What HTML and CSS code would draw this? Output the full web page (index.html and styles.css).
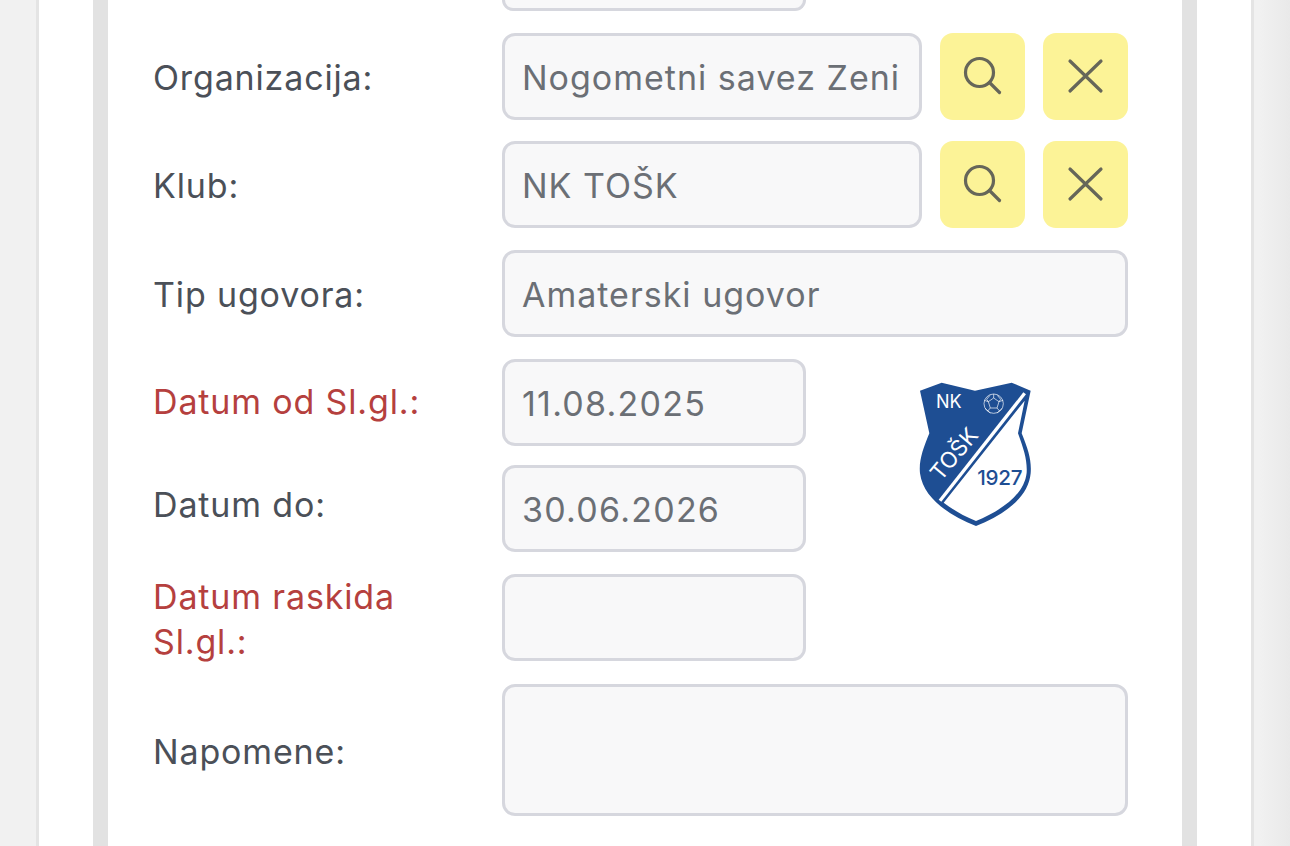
FILE: index.html
```html
<!DOCTYPE html>
<html lang="hr">
<head>
<meta charset="utf-8">
<title>Ugovor</title>
<link rel="stylesheet" href="styles.css">
</head>
<body>
<div class="page">
  <div class="outer">
    <div class="inner">
      <form class="form">
        <div class="row row-stub">
          <div class="label"></div>
          <div class="field field-date field-stub"></div>
        </div>
        <div class="row row-org">
          <div class="label label-low">Organizacija:</div>
          <div class="controls">
            <div class="field field-grow"><span class="value">Nogometni savez Zeni</span></div>
            <button type="button" class="btn">
              <svg class="icon" viewBox="0 0 36 36"><circle cx="14.5" cy="13.5" r="14" /><path d="M24.5 23.5l10 10" /></svg>
            </button>
            <button type="button" class="btn">
              <svg class="icon" viewBox="0 0 36 36"><path d="M2 2l31 30M33 2L2 32" /></svg>
            </button>
          </div>
        </div>
        <div class="row row-klub">
          <div class="label label-low">Klub:</div>
          <div class="controls">
            <div class="field field-grow"><span class="value">NK TOŠK</span></div>
            <button type="button" class="btn">
              <svg class="icon" viewBox="0 0 36 36"><circle cx="14.5" cy="13.5" r="14" /><path d="M24.5 23.5l10 10" /></svg>
            </button>
            <button type="button" class="btn">
              <svg class="icon" viewBox="0 0 36 36"><path d="M2 2l31 30M33 2L2 32" /></svg>
            </button>
          </div>
        </div>
        <div class="row row-tip">
          <div class="label label-low">Tip ugovora:</div>
          <div class="field field-wide"><span class="value">Amaterski ugovor</span></div>
        </div>
        <div class="dates">
          <div class="dates-col">
            <div class="row">
              <div class="label label-red label-up">Datum od Sl.gl.:</div>
              <div class="field field-date"><span class="value value-num">11.08.2025</span></div>
            </div>
            <div class="row row-do">
              <div class="label label-do">Datum do:</div>
              <div class="field field-date"><span class="value value-num">30.06.2026</span></div>
            </div>
          </div>
          <svg class="crest" viewBox="0 0 450 510" role="img" aria-label="NK TOŠK 1927">
            <path class="crest-blue" d="M60 62L125 38L225 62L335 38L392 62L365 190C385 240 395 270 392 310C385 385 310 435 228 468C146 435 70 385 60 310C56 270 70 235 88 190Z"/>
            <path class="crest-white" d="M374 92L354 190C372 240 382 270 380 308C373 375 302 422 228 453C190 438 160 420 131 398Z"/>
            <path class="crest-line" d="M374 70L120 392"/>
            <g class="ball">
              <circle cx="281" cy="101" r="29"/>
              <path d="M281 84l16 11-6 19h-20l-6-19zM281 84V72M297 95l12-4M291 114l8 9M271 114l-8 9M265 95l-12-4M270 76l-10 12 5 7M292 76l10 12-5 7M255 115l16 14M307 115l-16 14"/>
            </g>
            <text class="crest-nk" x="108" y="115">NK</text>
            <text class="crest-tosk" transform="translate(122 336) rotate(-50)">TOŠK</text>
            <text class="crest-year" x="232" y="344">1927</text>
          </svg>
        </div>
        <div class="row row-raskid">
          <div class="label label-red label-two">Datum raskida Sl.gl.:</div>
          <div class="field field-date"></div>
        </div>
        <div class="row row-nap">
          <div class="label label-lower">Napomene:</div>
          <div class="field field-wide field-area"></div>
        </div>
      </form>
    </div>
  </div>
</div>
</body>
</html>
```

FILE: styles.css
```css
* { box-sizing: border-box; }
html, body { margin: 0; height: 100%; }
body {
  background: #f1f1f1;
  font-family: Inter, "Noto Sans", sans-serif;
  overflow: hidden;
}
.page {
  width: 1290px;
  height: 846px;
  padding: 0 36px;
  overflow: hidden;
  background: linear-gradient(to right, #f1f1f1 1260px, #e9e9e9 1290px);
}
.outer {
  height: 100%;
  background: #fff;
  border-left: 3px solid #e4e4e4;
  border-right: 3px solid #e4e4e4;
  padding: 0 54px;
}
.inner {
  height: 100%;
  background: #fff;
  border-left: 15px solid #e2e2e2;
  border-right: 15px solid #e2e2e2;
  padding-left: 45px;
}
.form { display: flex; flex-direction: column; width: 975px; }
.row { display: flex; align-items: center; }
.label {
  flex: 0 0 349px;
  font-size: 34px;
  line-height: 45px;
  letter-spacing: 0.85px;
  color: #4b5058;
}
.label-red { color: #b5403e; }
.label-low { padding-top: 2px; }
.label-lower { padding-top: 2px; }
.label-up { position: relative; top: -1px; }
.label-two { padding-right: 50px; position: relative; top: 1px; }
.label-do { position: relative; top: -4px; }
.field {
  height: 87px;
  background: #f8f8f9;
  border: 3px solid #d6d7de;
  border-radius: 13px;
  display: flex;
  align-items: center;
  padding: 0 17px 0 18px;
  overflow: hidden;
}
.value {
  position: relative;
  top: 1px;
  left: -1px;
  font-size: 34px;
  letter-spacing: 1px;
  color: #6b6f75;
  white-space: nowrap;
}
.value-num { letter-spacing: 1.25px; }
.field-date { width: 304px; }
.field-stub {
  height: 11px;
  border-top: 0;
  border-top-left-radius: 0;
  border-top-right-radius: 0;
}
.field-wide { width: 626px; }
.field-grow { width: 420px; }
.field-area { height: 132px; }
.controls { display: flex; gap: 18px; }
.btn {
  width: 85px;
  height: 87px;
  padding: 0;
  border: 0;
  border-radius: 13px;
  background: #fcf397;
  display: flex;
  align-items: center;
  justify-content: center;
}
.icon {
  width: 36px;
  height: 36px;
  overflow: visible;
  fill: none;
  stroke: #666659;
  stroke-width: 3.2;
  stroke-linecap: round;
}
.row-org { margin-top: 22px; }
.row-klub { margin-top: 21px; }
.row-tip { margin-top: 22px; }
.dates { display: flex; margin-top: 22px; }
.dates-col { flex: 0 0 auto; }
.row-do { margin-top: 19px; }
.row-raskid { margin-top: 22px; height: 87px; }
.row-nap { margin-top: 23px; }
.crest { width: 150px; height: 170px; margin: 11px 0 0 94px; }
.crest-blue { fill: #1e4e93; }
.crest-white { fill: #fff; }
.crest-line { stroke: #fff; stroke-width: 10; fill: none; }
.ball circle, .ball path { fill: none; stroke: #fff; stroke-width: 2; }
.crest-nk { font-size: 54px; fill: #fff; font-family: Inter, sans-serif; }
.crest-tosk { font-size: 67px; fill: #fff; font-family: Inter, sans-serif; }
.crest-year { font-size: 62px; font-weight: 500; letter-spacing: -1px; fill: #1e4e93; font-family: Inter, sans-serif; }
```
